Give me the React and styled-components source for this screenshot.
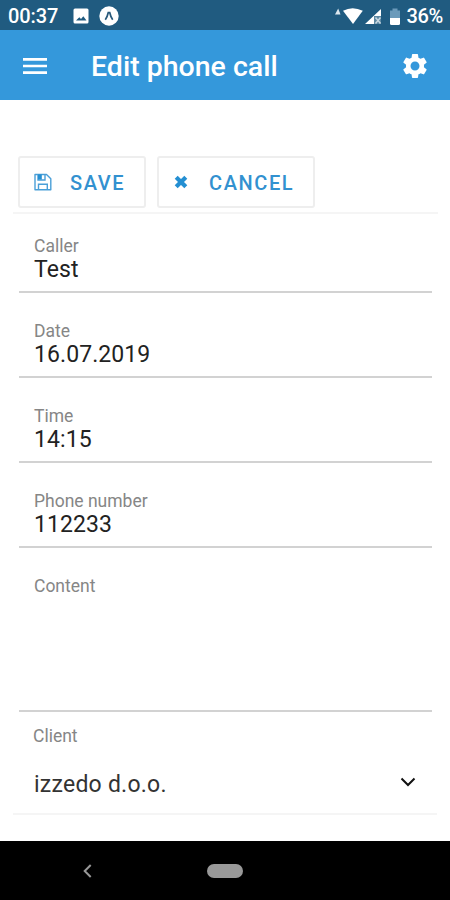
import React, { useState } from 'react';
import styled, { createGlobalStyle } from 'styled-components';
import { MdMenu, MdSettings } from 'react-icons/md';

const GlobalStyle = createGlobalStyle`
  * {
    box-sizing: border-box;
  }

  body {
    margin: 0;
    background: #fff;
    font-family: Roboto, "Liberation Sans", sans-serif;
  }
`;

// --- Icons ---
const PictureIcon = (
  <svg width="16" height="16" viewBox="0 0 16 16">
    <path fill="#fff" fillRule="evenodd" d="M2 .5h12A1.500 1.500 0 0 1 15.500 2v12a1.500 1.500 0 0 1-1.500 1.500H2A1.500 1.500 0 0 1 .5 14V2A1.500 1.500 0 0 1 2 .5zM3 12.500h10.500l-3.200-4.200-2.300 2.800-1.700-1.800z" />
  </svg>
);

const AppIcon = (
  <svg width="20" height="20" viewBox="0 0 20 20">
    <circle cx="10" cy="10" r="9.700" fill="#fff" />
    <path d="M6.300 13.700Q8.300 11 9.300 6.500H10.700Q11.700 11 13.700 13.700" fill="none" stroke="#27587a" strokeWidth="1.700" />
  </svg>
);

const SignalIcons = (
  <svg width="66" height="20" viewBox="0 0 66 20">
    <path d="M0 8.500L3.200 2.500L5.500 8.500z" fill="#dce7ee" />
    <path d="M8 4.800Q17.500-.4 27.800 4.800L18 18z" fill="#fff" />
    <path d="M30 18L46 3V10H39V18z" fill="#fff" />
    <path d="M39 10H46V18H39z" fill="#5c88a3" />
    <path d="M40.500 11.500L45.500 17.500M45.500 11.500L40.500 17.500" stroke="#c8d8e2" strokeWidth="1.500" />
    <path d="M57.500 2.500H62.500V4.500H65V12H55V4.500H57.500z" fill="#6b9aba" />
    <path d="M55 12H65V17.500Q65 19 63.500 19H56.500Q55 19 55 17.500z" fill="#fff" />
  </svg>
);

const SaveIcon = (
  <svg width="18" height="18" viewBox="0 0 18 18" fill="none" stroke="#4a9fd8" strokeWidth="1.400">
    <path d="M1 1.500H12.500L16.800 5.800V16.800H1z" strokeLinejoin="round" />
    <path d="M4.500 16.800V11.300H13.300V16.800" />
    <path d="M4 1.500V7H11V1.500" />
    <path d="M4 1.500H7.800V6.500H4z" fill="#248fd2" stroke="none" />
  </svg>
);

const CancelIcon = (
  <svg width="14" height="14" viewBox="0 0 14 14">
    <path d="M2.200 2.200L11.800 11.800M11.800 2.200L2.200 11.800" stroke="#248fd2" strokeWidth="4.200" />
  </svg>
);

const ChevronIcon = (
  <svg width="16" height="10" viewBox="0 0 16 10">
    <path d="M1.500 1.500L8 8L14.500 1.500" fill="none" stroke="#111" strokeWidth="2" />
  </svg>
);

const BackIcon = (
  <svg width="9" height="14" viewBox="0 0 9 14">
    <path d="M7.700 1L1.700 7L7.700 13" fill="none" stroke="#989898" strokeWidth="2" />
  </svg>
);

// --- Styled Components ---
const Page = styled.div`
  width: 450px;
  height: 900px;
  display: flex;
  flex-direction: column;
  background: #fff;
  overflow: hidden;
  white-space: nowrap;

  svg {
    display: block;
    flex-shrink: 0;
  }
`;

const StatusBar = styled.div`
  height: 30px;
  display: flex;
  align-items: center;
  padding: 2px 7px 0 8px;
  background: #205b80;
  color: #fff;
  font-size: 20px;
  font-weight: 500;
`;

const Clock = styled.span`
  width: 65px;
  letter-spacing: -0.1px;
`;

const StatusIcons = styled.div`
  flex: 1;
  display: flex;
  align-items: center;
  gap: 10px;
`;

const Battery = styled.span`
  margin-left: 5px;
  letter-spacing: -0.3px;
`;

const Header = styled.header`
  height: 70px;
  display: flex;
  align-items: center;
  padding: 2px 20px 0 19px;
  background: #3498db;
  color: #fff;
`;

const Title = styled.h1`
  flex: 1;
  margin: 0 0 0 40px;
  font-size: 28.5px;
  font-weight: 500;
`;

const IconButton = styled.button`
  padding: 0;
  border: none;
  background: none;
  color: #fff;
`;

const Toolbar = styled.div`
  height: 114px;
  margin: 0 12px 0 13px;
  padding: 56px 0 0 5px;
  display: flex;
  align-items: flex-start;
  gap: 11px;
  border-bottom: 2px solid #f5f5f5;
`;

const ActionBtn = styled.button`
  width: ${({ $width }) => $width}px;
  height: 52px;
  padding: 1px 0 0 ${({ $left }) => $left}px;
  display: flex;
  align-items: center;
  gap: ${({ $gap }) => $gap}px;
  border: 2px solid #eee;
  border-radius: 3px;
  background: #fff;
  color: #3291d0;
  font-family: inherit;
  font-size: 20px;
  font-weight: 500;
  letter-spacing: 1.6px;

  svg {
    margin-bottom: 1px;
  }
`;

const Form = styled.form`
  flex: 1;
  display: flex;
  flex-direction: column;
`;

const Field = styled.label`
  height: ${({ $height }) => $height || 85}px;
  margin: 0 18px 0 19px;
  padding: 0 15px;
  display: flex;
  flex-direction: column;
  border-bottom: 2px solid #d2d2d2;
`;

const Label = styled.span`
  height: 20px;
  margin-top: ${({ $top }) => $top ?? 28}px;
  flex-shrink: 0;
  font-size: 17.500px;
  line-height: 20px;
  color: #868686;
`;

const Input = styled.input`
  width: 100%;
  height: 27px;
  padding: 0;
  border: none;
  outline: none;
  background: none;
  color: #222;
  font-family: inherit;
  font-size: 23px;
  letter-spacing: 0.08px;
`;

const TextArea = styled.textarea`
  flex: 1;
  padding: 0;
  border: none;
  outline: none;
  resize: none;
  font: inherit;
`;

const ClientField = styled.div`
  height: 103px;
  margin: 0 13px;
  padding: 0 21px 0 20px;
  border-bottom: 2px solid #f5f5f5;
  display: flex;
  flex-direction: column;
`;

const SelectRow = styled.div`
  margin-top: 24px;
  padding-left: 1px;
  height: 28px;
  display: flex;
  align-items: center;
  justify-content: space-between;
  color: #333;
  font-size: 23px;
  letter-spacing: 0.24px;

  svg {
    margin-bottom: 5px;
  }
`;

const NavBar = styled.nav`
  height: 59px;
  display: grid;
  grid-template-columns: 175px 100px 175px;
  align-items: center;
  justify-items: center;
  background: #000;
`;

const HomePill = styled.span`
  width: 36px;
  height: 14px;
  border-radius: 7px;
  background: #999;
`;

// --- Component ---
export default function App() {
  const [call, setCall] = useState({
    caller: 'Test',
    date: '16.07.2019',
    time: '14:15',
    phone: '112233',
    content: '',
  });

  const handleChange = (e) => setCall({ ...call, [e.target.name]: e.target.value });

  const fields = [
    { label: 'Caller', key: 'caller', height: 79, top: 22 },
    { label: 'Date', key: 'date' },
    { label: 'Time', key: 'time' },
    { label: 'Phone number', key: 'phone' },
  ];

  return (
    <>
      <GlobalStyle />
      <Page>
        <StatusBar>
          <Clock>00:37</Clock>
          <StatusIcons>{PictureIcon}{AppIcon}</StatusIcons>
          {SignalIcons}
          <Battery>36%</Battery>
        </StatusBar>

        <Header>
          <IconButton type="button"><MdMenu size={32} /></IconButton>
          <Title>Edit phone call</Title>
          <IconButton type="button"><MdSettings size={30} /></IconButton>
        </Header>

        <Toolbar>
          <ActionBtn type="button" $width={128} $left={14} $gap={18}>{SaveIcon}SAVE</ActionBtn>
          <ActionBtn type="button" $width={158} $left={15} $gap={21}>{CancelIcon}CANCEL</ActionBtn>
        </Toolbar>

        <Form>
          {fields.map(field => (
            <Field key={field.key} $height={field.height}>
              <Label $top={field.top}>{field.label}</Label>
              <Input name={field.key} value={call[field.key]} onChange={handleChange} />
            </Field>
          ))}
          <Field $height={164}>
            <Label>Content</Label>
            <TextArea name="content" value={call.content} onChange={handleChange} />
          </Field>
          <ClientField>
            <Label $top={14}>Client</Label>
            <SelectRow>
              izzedo d.o.o.
              {ChevronIcon}
            </SelectRow>
          </ClientField>
        </Form>

        <NavBar>
          {BackIcon}
          <HomePill />
        </NavBar>
      </Page>
    </>
  );
}
